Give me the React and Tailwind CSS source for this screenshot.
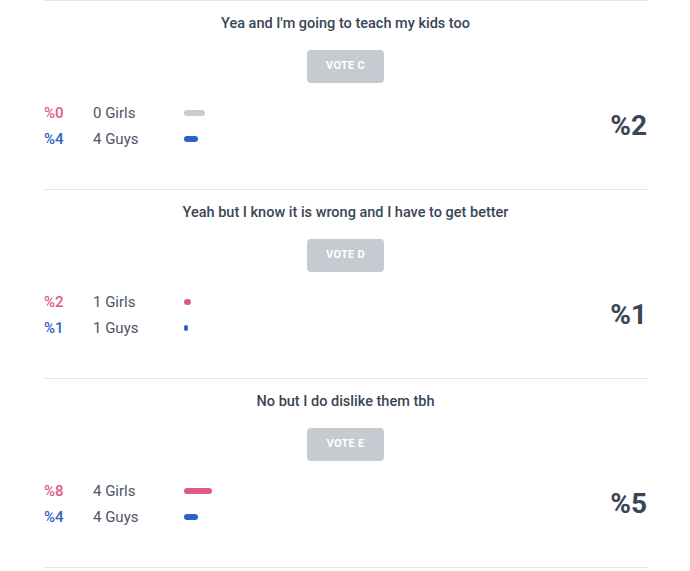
import React from "react";

const polls = [
  {
    question: "Yea and I'm going to teach my kids too",
    option: "C",
    total: 2,
    girls: { pct: 0, count: 0 },
    guys: { pct: 4, count: 4 },
  },
  {
    question: "Yeah but I know it is wrong and I have to get better",
    option: "D",
    total: 1,
    girls: { pct: 2, count: 1 },
    guys: { pct: 1, count: 1 },
  },
  {
    question: "No but I do dislike them tbh",
    option: "E",
    total: 5,
    girls: { pct: 8, count: 4 },
    guys: { pct: 4, count: 4 },
  },
];

const Bar = ({ pct, color }) => {
  // empty results show a grey placeholder pill
  if (pct === 0) {
    return <span className="block h-[6px] w-[21px] rounded-full bg-[#c9cdd2]" />;
  }
  return (
    <span
      className={`block h-[6px] rounded-full ${color}`}
      style={{ width: `${Math.max(pct * 3.5, 3)}px` }}
    />
  );
};

const StatRow = ({ pct, label, pctColor, barColor }) => (
  <div className="flex items-center h-[26px]">
    <span className={`w-[49px] text-[15px] font-medium ${pctColor}`}>%{pct}</span>
    <span className="w-[91px] text-[15px] text-[#4b5563]">{label}</span>
    <Bar pct={pct} color={barColor} />
  </div>
);

const PollOption = ({ poll }) => (
  <div className="border-b border-[#e6e8eb] h-[189px] flex flex-col pt-[13px]">
    <p className="text-center text-[14.5px] leading-5 font-medium text-[#3a4656]">
      {poll.question}
    </p>
    <div className="flex justify-center mt-[16px]">
      <button className="w-[77px] h-[33px] rounded bg-[#c6cbd1] text-white text-[11px] font-bold tracking-wide">
        VOTE {poll.option}
      </button>
    </div>
    <div className="flex items-center justify-between mt-[17px] pl-px">
      <div>
        <StatRow
          pct={poll.girls.pct}
          label={`${poll.girls.count} Girls`}
          pctColor="text-[#e0598b]"
          barColor="bg-[#e0598b]"
        />
        <StatRow
          pct={poll.guys.pct}
          label={`${poll.guys.count} Guys`}
          pctColor="text-[#2d62c5]"
          barColor="bg-[#2d62c5]"
        />
      </div>
      <span className="text-[28px] font-bold text-[#3a4656] leading-none pr-px">
        %{poll.total}
      </span>
    </div>
  </div>
);

export default function App() {
  return (
    <div
      className="w-[690px] h-[571px] bg-white overflow-hidden"
      style={{ fontFamily: "Roboto, 'Liberation Sans', sans-serif" }}
    >
      <div className="ml-[43px] w-[605px] border-t border-[#e6e8eb]">
        {polls.map((poll) => (
          <PollOption key={poll.option} poll={poll} />
        ))}
      </div>
    </div>
  );
}
